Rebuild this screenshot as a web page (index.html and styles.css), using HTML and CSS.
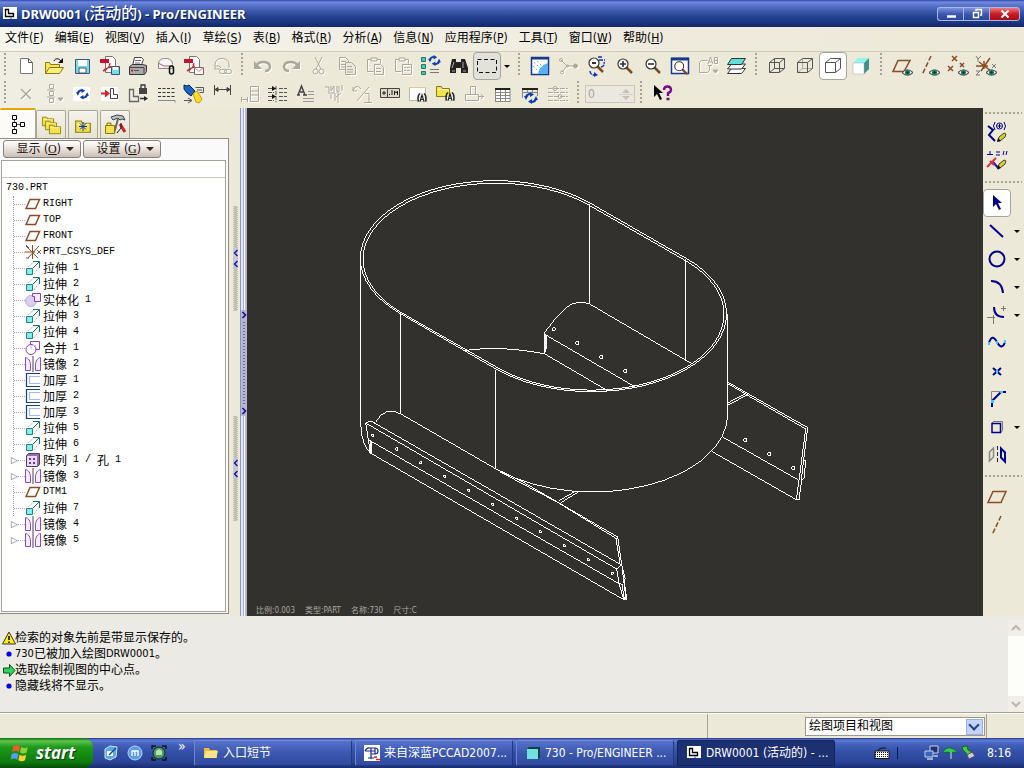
FILE: index.html
```html
<!DOCTYPE html>
<html lang="zh-CN">
<head>
<meta charset="utf-8">
<title>DRW0001 (活动的) - Pro/ENGINEER</title>
<link rel="stylesheet" href="styles.css">
</head>
<body>
<svg class="defs" aria-hidden="true">
  <defs>
    <symbol id="t-plane" viewBox="0 0 16 16"><path d="M5 3.500H14.500L10.500 12.500H1z" class="brown w15"/></symbol>
    <symbol id="t-csys" viewBox="0 0 16 16"><path d="M1 2l12 12M14 2L3 14M0 8h10M7.500 1v14" class="brown"/><path d="M1 1l3 3M1 14h3M12 6l4 4M16 6l-4 4" stroke="#666" fill="none"/></symbol>
    <symbol id="t-ext" viewBox="0 0 16 16"><path d="M1.500 8.500h6v6h-6z" fill="#7ff0ec" stroke="#2b7d7d"/><path d="M3 7l7-6M9 14l6-8" stroke="#8aa" stroke-dasharray="1 1"/><path d="M8 8l6-6M8 1.500h6.500V8" fill="none" stroke="#1d6a66"/></symbol>
    <symbol id="t-solid" viewBox="0 0 16 16"><circle cx="6" cy="9" r="5.500" fill="#d9cdf0" stroke="#c0aee0"/><path d="M7.500 1.500h8v8h-6v-5h-2z" fill="#f4eeff" stroke="#8a3fc0"/></symbol>
    <symbol id="t-merge" viewBox="0 0 16 16"><path d="M5.500 4.500v-3h9v8h-4" fill="none" stroke="#8a3fc0"/><circle cx="6" cy="9.500" r="5" fill="none" stroke="#8a3fc0"/><path d="M6 9.500V5.500h5" fill="none" stroke="#c9b7ee"/></symbol>
    <symbol id="t-mirror" viewBox="0 0 16 16"><path d="M.5 1.500v13h5V9c0-4-2-7-5-7.500M15.500 1.500v13h-5V9c0-4 2-7 5-7.500" fill="#f3ecff" stroke="#8c48c8"/><path d="M8 0v16" stroke="#444"/></symbol>
    <symbol id="t-thick" viewBox="0 0 16 16"><path d="M15 1.500H1.500v13H15" fill="none" stroke="#123c9a" stroke-width="1.200"/><path d="M15 4.500H4.500v7H15" fill="none" stroke="#a9b4ff" stroke-width="1.200"/></symbol>
    <symbol id="t-pattern" viewBox="0 0 16 16"><path d="M1.500 3.500l2-2h11v11l-2 2h-11z" fill="#8e6fa8" stroke="#553a70"/><path d="M2 4h10v10H2z" fill="#eadcf6"/><path d="M4 6h2v2H4zM8 6h2v2H8zM4 10h2v2H4zM8 10h2v2H8z" fill="#6b3b96"/></symbol>
    <symbol id="folder" viewBox="0 0 16 14"><path d="M1.500 12.500v-10h5l1 2h7v8z" fill="#f3e24c" stroke="#8a7a10"/><path d="M2.500 5.500h11" stroke="#fff8b0"/></symbol>
    <symbol id="eye" viewBox="0 0 10 6"><path d="M0 3q5-5 10 0q-5 5-10 0" fill="#fff" stroke="#555"/><circle cx="5" cy="3" r="2.300" fill="#167a5c"/><circle cx="5" cy="3" r="1" fill="#022"/></symbol>
    <symbol id="drw" viewBox="0 0 16 16"><path d="M1 1h14v12H1z" fill="#fff"/><path d="M3.500 3.500h3v4h5v3h-8z" fill="none" stroke="#000" stroke-width="1.300"/><path d="M7 13.500h8M9 11.500v3" stroke="#123a9c"/></symbol>
    <symbol id="swap" viewBox="0 0 14 12"><path d="M2 6c0-3 2-4 5-4M12 6c0 3-2 4-5 4" fill="none" stroke="#0b3fae" stroke-width="2"/><path d="M6 0l4 2.500L6 5zM8 7l-4 2.500L8 12z" fill="#0b3fae"/><path d="M0 4h4L2 8zM10 8h4l-2-4z" fill="#0b3fae"/></symbol>
    <symbol id="pdf" viewBox="0 0 16 18"><path d="M5.500.5h7l3 3v13h-10z" fill="#fff" stroke="#777"/><path d="M0 3h9v4H0z" fill="#c8102e"/><path d="M4 15c3-1 6-5 6-8M9 8c1 3 3 5 6 4M3 15q5-5 11-3" fill="none" stroke="#b9323c" stroke-width="1.200"/></symbol>
    <symbol id="pencil" viewBox="0 0 10 10"><path d="M1 9l1-4 5-4 2 1-1 3-5 4z" fill="#d8d02a" stroke="#443"/><path d="M0 10l1-4 3 3z" fill="#111"/></symbol>
    <symbol id="lens" viewBox="0 0 18 18"><path d="M10 10l6 6" stroke="#7a4a20" stroke-width="2.500"/><circle cx="7" cy="7" r="5" fill="#fffef4" stroke="#333" stroke-width="1.200"/></symbol>
    <symbol id="mark" viewBox="0 0 12 10"><path d="M1 9.500a5 5 0 1 1 10 0z" fill="#fff" stroke="#aaa" stroke-width=".6"/><path d="M2.500 9.500Q1 4 4 1.500M9.500 9.500Q11 4 8 1.500" fill="none" stroke="#222" stroke-width="1.500"/><path d="M4 9.500L6 3l2 6.500M5 7.500h2" fill="none" stroke="#222" stroke-width="1.200"/></symbol>
  </defs>
</svg>

<div class="app">
  <header class="titlebar">
    <svg class="i16"><use href="#drw"/></svg>
    <h1>DRW0001 (<span>活动的</span>) - Pro/ENGINEER</h1>
    <div class="winbtns">
      <button aria-label="最小化"><svg viewBox="0 0 24 12"><path d="M8 8.500h9" stroke="#fff" stroke-width="2.500"/></svg></button>
      <button aria-label="还原"><svg viewBox="0 0 24 12"><path d="M11 3V1.500h5.500V7H15M8.500 4.500h5v5h-5z" fill="none" stroke="#fff" stroke-width="1.400"/></svg></button>
      <button class="close" aria-label="关闭"><svg viewBox="0 0 24 12"><path d="M8.500 2.500l7 7M15.500 2.500l-7 7" stroke="#fff" stroke-width="2"/></svg></button>
    </div>
  </header>

  <nav class="menubar">
    <a href="#">文件(<u>F</u>)</a><a href="#">编辑(<u>E</u>)</a><a href="#">视图(<u>V</u>)</a><a href="#">插入(<u>I</u>)</a><a href="#">草绘(<u>S</u>)</a><a href="#">表(<u>B</u>)</a><a href="#">格式(<u>R</u>)</a><a href="#">分析(<u>A</u>)</a><a href="#">信息(<u>N</u>)</a><a href="#">应用程序(<u>P</u>)</a><a href="#">工具(<u>T</u>)</a><a href="#">窗口(<u>W</u>)</a><a href="#">帮助(<u>H</u>)</a>
  </nav>

  <div class="toolbars">
    <div class="toolbar">
      <i class="grip first"></i>
      <button class="tb" aria-label="新建"><svg viewBox="0 0 24 24"><path d="M6.500 4.500h8l4 4v11h-12z" fill="#fff" stroke="#777"/><path d="M14.500 4.500v4h4" fill="none" stroke="#555"/></svg></button>
      <button class="tb" aria-label="打开"><svg viewBox="0 0 24 24"><path d="M3.500 19.500v-11h4l1 2h9v3" fill="#f6e65a" stroke="#8a7a10"/><path d="M3.500 19.500l4-6h14l-4 6z" fill="#fbf07c" stroke="#8a7a10"/><path d="M12 7c1-3 5-3 7 0" fill="none" stroke="#111"/><path d="M21 4v5h-5z" fill="#111"/></svg></button>
      <button class="tb" aria-label="保存"><svg viewBox="0 0 24 24"><path d="M5.500 5.500h14v14h-14z" fill="#7adbe6" stroke="#457"/><path d="M8 6h9v6H8z" fill="#fff"/><path d="M9 14h7v5H9z" fill="#fff" stroke="#457"/></svg></button>
      <button class="tb" aria-label="保存PDF"><svg viewBox="0 0 24 24"><use href="#pdf" x="2" y="2" width="16" height="18"/><path d="M13.500 12.500h8v8h-8z" fill="#7adbe6" stroke="#357"/><path d="M15 13h5v3h-5z" fill="#fff"/></svg></button>
      <button class="tb" aria-label="打印"><svg viewBox="0 0 24 24"><path d="M6.500 12l2-8.500h7l2 2L15 12z" fill="#fff" stroke="#444"/><path d="M9 6.500h6M9 9h5" stroke="#666"/><path d="M3.500 12.500l3-2h10l4 1v6l-2 3h-15z" fill="#aaa" stroke="#333"/><path d="M3 13.500h15v6" fill="none" stroke="#444"/><path d="M5 16.500h2" stroke="#d22" stroke-width="2"/><path d="M8 16.500h5" stroke="#555"/></svg></button>
      <button class="tb" aria-label="邮件"><svg viewBox="0 0 24 24"><path d="M4.500 14.500v-5q1-5 6-5h3q5 1 5 6v4z" fill="#f5f5f5" stroke="#888"/><path d="M4 9l6 3h8" fill="none" stroke="#a66"/><path d="M15.500 18v-4q0-2 2-2t2 2v4q0 2-2 2t-2-2" fill="none" stroke="#111" stroke-width="1.500"/></svg></button>
      <button class="tb" aria-label="邮寄PDF"><svg viewBox="0 0 24 24"><use href="#pdf" x="2" y="2" width="16" height="18"/><path d="M12.500 13.500h9v7h-9z" fill="#fff" stroke="#866"/><path d="M12.500 13.500l4.500 4 4.500-4" fill="none" stroke="#c88"/></svg></button>
      <button class="tb off" aria-label="链接"><svg viewBox="0 0 24 24"><path d="M5 15.500V10q1-5.500 6-5.500h2q6 1 6 6v3M5 15h5M5 12h4l2 2"/><rect x="9.500" y="15.500" width="7" height="4" rx="2"/><rect x="14.500" y="15.500" width="7" height="4" rx="2"/></svg></button>
      <i class="grip"></i>
      <button class="tb off" aria-label="撤消"><svg viewBox="0 0 24 24"><path d="M5 12c3-6 14-5 14 1 0 3-3 4-5 4" stroke-width="2.500"/><path d="M3 7v8h8z" fill="#aca899" stroke="none"/></svg></button>
      <button class="tb off" aria-label="重做"><svg viewBox="0 0 24 24"><path d="M19 12C16 6 5 7 5 13c0 3 3 4 5 4" stroke-width="2.500"/><path d="M21 7v8h-8z" fill="#aca899" stroke="none"/></svg></button>
      <button class="tb off" aria-label="剪切"><svg viewBox="0 0 24 24"><path d="M8 3l6 12M15 3L9 15"/><circle cx="8.500" cy="17.500" r="2.500"/><circle cx="14.500" cy="17.500" r="2.500"/></svg></button>
      <button class="tb off" aria-label="复制"><svg viewBox="0 0 24 24"><path d="M4.500 3.500h6l3 3v9h-9zM6 7.500h5M6 10.500h5M6 13h4"/><path d="M10.500 8.500h6l4 4v8h-10z" fill="#ece9d8"/><path d="M12 12.500h5M12 15.500h6M12 18h6"/></svg></button>
      <button class="tb off" aria-label="粘贴"><svg viewBox="0 0 24 24"><path d="M8 5.500H4.500v12h6M14 5.500h3.500v4M8 4h6v3H8z"/><path d="M11.500 10.500h6l3 3v7h-9zM13 14.500h5M13 17.500h5"/></svg></button>
      <button class="tb off" aria-label="选择性粘贴"><svg viewBox="0 0 24 24"><path d="M8 5.500H4.500v12h6M14 5.500h3.500v4M8 4h6v3H8z"/><path d="M11.500 10.500h9v10h-9zM13 13.500h2M16 13.500h3M13 16.500h2M16 16.500h3"/></svg></button>
      <button class="tb" aria-label="再生"><svg viewBox="0 0 24 24"><path d="M2.500 3.500h4v4h-4zM2.500 10.500h4v4h-4zM2.500 17.500h4v3h-4z" fill="#48c8b4" stroke="#276"/><use href="#swap" x="9" y="1" width="13" height="11"/><path d="M11 15.500h9M11 18.500h9" stroke="#777"/></svg></button>
      <button class="tb" aria-label="查找"><svg viewBox="0 0 24 24"><path d="M5 5h4v3h5V5h4l3 9v5h-7v-5h-5v5H3v-5z" fill="#222"/><path d="M7 8l-2 6M16 8v6M5 17h3M16 17h3" stroke="#aaa"/></svg></button>
      <button class="tb on" aria-label="选取框"><svg viewBox="0 0 24 24"><path d="M2.500 5.500h19v13h-19z" fill="none" stroke="#111" stroke-dasharray="4 2.500"/></svg></button>
      <button class="dd" aria-label="更多选取"></button>
      <i class="grip"></i>
      <button class="tb" aria-label="重画"><svg viewBox="0 0 24 24"><path d="M3.500 3.500h17v17h-17z" fill="#fff" stroke="#15398c" stroke-width="1.500"/><path d="M3 4.500h18" stroke="#15398c" stroke-width="2"/><path d="M10 20q1-8 10-11v11z" fill="#58b0f0"/><path d="M6 8l9 9M9 7l6 6M5 12l6 6" stroke="#6bc" stroke-dasharray="2 2"/></svg></button>
      <button class="tb off" aria-label="旋转中心"><svg viewBox="0 0 24 24"><path d="M5 6l6 6h8M11 12l-5 6"/><circle cx="5" cy="6" r="1.500"/><circle cx="19.500" cy="12" r="2" fill="#aca899"/><circle cx="6" cy="18.500" r="1.500"/><circle cx="11.500" cy="12" r="1"/></svg></button>
      <button class="tb" aria-label="定向模式"><svg viewBox="0 0 24 24"><use href="#lens" x="3" y="2" width="18" height="18"/><path d="M8 9h4" stroke="#333" stroke-width="2"/><path d="M14 3h5M15 6h6M6 17q0 4 5 4M17 13q4-1 3-5" fill="none" stroke="#1236b0" stroke-width="1.500" stroke-dasharray="4 1"/><path d="M10 18l4 3-4 2z" fill="#1236b0"/></svg></button>
      <button class="tb" aria-label="放大"><svg viewBox="0 0 24 24"><use href="#lens" x="4" y="3" width="18" height="18"/><path d="M8 10h6M11 7v6" stroke="#234" stroke-width="1.600"/></svg></button>
      <button class="tb" aria-label="缩小"><svg viewBox="0 0 24 24"><use href="#lens" x="4" y="3" width="18" height="18"/><path d="M8 10h6" stroke="#234" stroke-width="1.600"/></svg></button>
      <button class="tb" aria-label="重新调整"><svg viewBox="0 0 24 24"><path d="M3.500 4.500h17v15h-17z" fill="#fff" stroke="#15398c" stroke-width="1.500"/><path d="M3 5h18" stroke="#15398c" stroke-width="3"/><use href="#lens" x="5" y="6" width="16" height="16"/></svg></button>
      <button class="tb off" aria-label="已命名视图"><svg viewBox="0 0 24 24"><path d="M3.500 8.500l2-2h6M3.500 8.500v10h8l2-2v-5M12 11.500h4"/><path d="M12 10l2.500-7 2.500 7M13 8h3M18.500 3.500h3v6h-3zM18.500 6.500h3"/><path d="M17 16h5l-2.500 3z" fill="#aca899"/></svg></button>
      <button class="tb" aria-label="层"><svg viewBox="0 0 24 24"><path d="M3.500 19.500l4-5h14l-4 5z" fill="#fff" stroke="#333"/><path d="M3.500 15l4-5h14l-4 5z" fill="#fff" stroke="#333"/><path d="M3.500 10.500l4-6h14l-4 6z" fill="#5fe0d8" stroke="#333"/></svg></button>
      <i class="grip"></i>
      <button class="tb" aria-label="线框"><svg viewBox="0 0 24 24" class="cube"><path d="M4.500 8.500h10v10h-10zM9.500 4.500h10v10h-10zM4.500 8.500l5-4M14.500 8.500l5-4M14.500 18.500l5-4M4.500 18.500l5-4"/></svg></button>
      <button class="tb" aria-label="隐藏线"><svg viewBox="0 0 24 24" class="cube"><path d="M9.500 4.500v10h10M4.500 18.500l5-4" stroke="#aaa"/><path d="M4.500 8.500h10v10h-10zM9.500 4.500h10v10M9.500 4.500l-5 4M14.500 8.500l5-4M14.500 18.500l5-4"/></svg></button>
      <button class="tb on white" aria-label="无隐藏线"><svg viewBox="0 0 24 24" class="cube"><path d="M4.500 8.500h10v10h-10zM9.500 4.500h10v10M9.500 4.500l-5 4M14.500 8.500l5-4M14.500 18.500l5-4"/></svg></button>
      <button class="tb" aria-label="着色"><svg viewBox="0 0 24 24"><path d="M4 9l5-5h11l-5 5z" fill="#8ff4f4"/><path d="M15 9l5-5v11l-5 5z" fill="#3f8f8a"/><path d="M4 9h11v11H4z" fill="#fff" stroke="#aaa" stroke-width=".5"/></svg></button>
      <i class="grip"></i>
      <button class="tb" aria-label="平面显示"><svg viewBox="0 0 24 24"><path d="M8 6.500h12L14 17.500H3z" class="brown w15"/><use href="#eye" x="12" y="15" width="11" height="7"/></svg></button>
      <button class="tb" aria-label="轴显示"><svg viewBox="0 0 24 24"><path d="M13 2L4 21" class="brown w15" stroke-dasharray="5 2"/><use href="#eye" x="11" y="15" width="11" height="7"/></svg></button>
      <button class="tb" aria-label="点显示"><svg viewBox="0 0 24 24"><path d="M6 2l5 5M11 2L6 7M2 12l5 5M7 12l-5 5M14 9l4 4M18 9l-4 4" class="brown w15"/><use href="#eye" x="12" y="15" width="11" height="7"/></svg></button>
      <button class="tb" aria-label="坐标系显示"><svg viewBox="0 0 24 24"><path d="M5 8l12 9M16 4L7 17M2 12h12M10 7v8" class="brown w15"/><path d="M2 2l2 3 3-3M4 5v3M18 10l4 4M22 10l-4 4M2 17h4l-4 4h4" fill="none" stroke="#777"/><use href="#eye" x="12" y="15" width="11" height="7"/></svg></button>
    </div>
    <div class="toolbar">
      <i class="grip first"></i>
      <button class="tb off" aria-label="删除"><svg viewBox="0 0 24 24"><path d="M7 7l10 10M17 7L7 17" stroke-width="1.500"/></svg></button>
      <button class="tb off" aria-label="块"><svg viewBox="0 0 24 24"><path d="M7.500 2.500h4v4h-4zM7.500 9.500h4v4h-4zM7.500 16.500h4v4h-4zM5 8h8M5 15h8"/><path d="M16 16h5l-2.500 3z" fill="#aca899"/></svg></button>
      <button class="tb" aria-label="更新"><svg viewBox="0 0 24 24"><path d="M3 5h17v14H3z" fill="#fff"/><use href="#swap" x="6" y="6" width="13" height="12"/></svg></button>
      <button class="tb" aria-label="移动"><svg viewBox="0 0 24 24"><path d="M3 5h17v14H3z" fill="#fff"/><path d="M3 11.500h6" stroke="#d3222a" stroke-width="2"/><path d="M7 7.500l5 4-5 4z" fill="#d3222a"/><path d="M12.500 6.500h3v6h4v4h-7z" fill="none" stroke="#444"/></svg></button>
      <button class="tb" aria-label="锁定"><svg viewBox="0 0 24 24"><path d="M3.500 7.500h4v7h5v5h-9z" fill="none" stroke="#666" stroke-width="1.300"/><path d="M13 6h8v6h-8z" fill="#444"/><path d="M15 6V3h4v3M14 16.500h5" fill="none" stroke="#333" stroke-width="1.300"/><path d="M18 14l4 2.500-4 2.500z" fill="#222"/></svg></button>
      <button class="tb" aria-label="线型"><svg viewBox="0 0 24 24"><path d="M4 6.500h17M4 10.500h17M4 14.500h17" stroke="#333" stroke-dasharray="3 1.500"/><path d="M4 18.500h17v2" fill="none" stroke="#888"/></svg></button>
      <button class="tb" aria-label="高亮"><svg viewBox="0 0 24 24"><path d="M2 3l3 1 2-1 6 6-4 5-4-3-3-4z" fill="#1466c8" stroke="#124"/><path d="M11 12l4-3 5 8-3 4-3-1z" fill="#ffdf2b" stroke="#c90"/><path d="M13.500 5.500h8v5h-4M15 8h5M2 18.500h7M6 16l4 2.500L6 21" fill="none" stroke="#555"/></svg></button>
      <button class="tb" aria-label="尺寸"><svg viewBox="0 0 24 24"><path d="M4.500 3v10M20.500 3v10M5 7.500h15M5 7.500l3-2v4zM20 7.500l-3-2v4z" fill="#333" stroke="#444"/></svg></button>
      <button class="tb off" aria-label="标准尺寸"><svg viewBox="0 0 24 24"><path d="M3.500 20v-5M3.500 17.500h6M9.500 20v-5M12.500 4.500h8v15M12.500 4.500v15h8M12.500 9h8M12.500 13h8"/></svg></button>
      <button class="tb" aria-label="清理尺寸"><svg viewBox="0 0 24 24"><path d="M2 6.500h8M2 14.500h8M10 4v16M13 6.500h8M13 10.500h8M13 14.500h8M13 18.500h8M2 10.500h6M2 18.500h6" stroke="#555" stroke-dasharray="4 1"/><path d="M6 4l4 2.500L6 9zM6 12l4 2.500L6 17z" fill="#111"/></svg></button>
      <button class="tb" aria-label="注释"><svg viewBox="0 0 24 24"><path d="M4 13L7.500 4l3.500 9M6 10h4M3 13h3M9 13h4" fill="none" stroke="#444" stroke-width="1.500"/><path d="M14 9.500h6M14 12.500h6M9 16.500h11M9 19.500h11" stroke="#999"/></svg></button>
      <button class="tb off" aria-label="对齐"><svg viewBox="0 0 24 24"><path d="M3 5h4v5M9 4v5l3-5v6M15 4v6h2V4M20 3v6M6 11h7v8M9 12v5M16 11v10M19 11l-5 4"/></svg></button>
      <button class="tb off" aria-label="断开"><svg viewBox="0 0 24 24"><path d="M3 9l2-4q4-2 6 2M3 5v4h4M7 19L19 5M15 11.500h4v9M14 20.500h8"/></svg></button>
      <button class="tb" aria-label="几何公差"><svg viewBox="0 0 24 24"><path d="M2.500 6.500h19v9h-19zM9.500 6.500v9" fill="#ddd8c4" stroke="#444"/><path d="M4 11h4M6 9v4M11.500 13v-1M14 8v5M16.500 13V9l1.500 2 1.500-2v4" fill="none" stroke="#222"/></svg></button>
      <button class="tb" aria-label="符号"><svg viewBox="0 0 24 24"><path d="M3.500 5.500h16v13h-16z" fill="#fff" stroke="#bba"/><path d="M3 5.500h17" stroke="#d8cc90"/><use href="#mark" x="10" y="10" width="12" height="10"/></svg></button>
      <button class="tb" aria-label="符号库"><svg viewBox="0 0 24 24"><use href="#folder" x="1" y="2" width="16" height="14"/><use href="#mark" x="10" y="9" width="12" height="10"/></svg></button>
      <button class="tb off" aria-label="球标"><svg viewBox="0 0 24 24"><path d="M8.500 4.500h5v8h-5zM3.500 12.500h13v6h-13zM17 14.500h5M19 12l2 2.500-2 2.500"/></svg></button>
      <button class="tb" aria-label="表格"><svg viewBox="0 0 24 24"><path d="M5 8h15v12H5z" fill="#fff"/><path d="M5.500 6v14M10.500 6v14M15.500 6v14M20 6v14M5 10.500h15M5 13.500h15M5 16.500h15M5 19.500h15" stroke="#888"/><path d="M5 7h15" stroke="#222" stroke-width="2"/></svg></button>
      <button class="tb" aria-label="更新表"><svg viewBox="0 0 24 24"><path d="M4.500 6v10M4 10.500h16M9.500 6v5M14.500 6v5M19.500 6v8" stroke="#888"/><path d="M4 7h16" stroke="#222" stroke-width="2"/><use href="#swap" x="6" y="10" width="14" height="12"/></svg></button>
      <button class="tb off" aria-label="参数"><svg viewBox="0 0 24 24"><path d="M2 6.500h20M2 10.500h20M2 14.500h20M2 18.500h20" stroke-dasharray="5 1"/><circle cx="9" cy="6.500" r="2"/><circle cx="14" cy="14.500" r="2"/></svg></button>
      <i class="grip"></i>
      <label class="spin"><input type="text" value="0" aria-label="数值" disabled><span class="updn"><svg viewBox="0 0 14 16"><path d="M3 7l4-4 4 4zM3 10l4 4 4-4z" fill="#c4c1b4"/><path d="M0 8.500h14" stroke="#d2cfc2"/></svg></span></label>
      <i class="grip"></i>
      <button class="tb" aria-label="上下文帮助"><svg viewBox="0 0 24 24"><path d="M4 3v12l3-3 3 6 2-1-3-6h4z" fill="#000"/><path d="M14 8q0-3.500 3.500-3.500T21 8q0 2-3 3v3M16.500 17h3" fill="none" stroke="#7a0a86" stroke-width="2.400"/></svg></button>
    </div>
  </div>

  <main class="work">
    <aside class="side">
      <div class="tabs">
        <button class="tab sel" aria-label="模型树"><svg viewBox="0 0 24 24"><path d="M6.500 3.500h4v4h-4zM6.500 10.500h4v4h-4zM6.500 17.500h4v4h-4zM14.500 10.500h4v4h-4z" fill="#fff" stroke="#000"/><path d="M8.500 8v2M8.500 15v2M11 12.500h3" stroke="#555"/></svg></button>
        <button class="tab" aria-label="文件夹浏览器"><svg viewBox="0 0 24 24"><use href="#folder" x="2" y="2" width="14" height="12"/><use href="#folder" x="5" y="6" width="14" height="12"/><use href="#folder" x="9" y="10" width="14" height="12"/></svg></button>
        <button class="tab" aria-label="收藏夹"><svg viewBox="0 0 24 24"><use href="#folder" x="3" y="5" width="18" height="16"/><path d="M12 9v9M8 13.500h8M9 10.500l6 6M15 10.500l-6 6" stroke="#1236b0"/></svg></button>
        <button class="tab" aria-label="连接"><svg viewBox="0 0 24 24"><path d="M8 4l6-2 6 1 2 4-3-1-2 1-2-2-5 2z" fill="#b8c4cc" stroke="#444"/><path d="M15 6L11 20" stroke="#666" stroke-width="2"/><path d="M17 11l5 8" stroke="#c22" stroke-width="3"/><path d="M18 10v5l-4 5" fill="none" stroke="#222"/><path d="M2.500 12.500h9v8h-9z" fill="#f3e24c" stroke="#8a7a10"/><path d="M4 12v-2h4v2" fill="#f3e24c" stroke="#8a7a10"/></svg></button>
      </div>
      <div class="panel">
        <div class="btnrow">
          <button class="pbtn"><span>显示 (<u>O</u>)</span><i class="tri"></i></button>
          <button class="pbtn"><span>设置 (<u>G</u>)</span><i class="tri"></i></button>
        </div>
        <div class="treebox">
          <div class="treehead"></div>
          <div class="root">730.PRT</div>
          <ul class="tree">
            <li><svg><use href="#t-plane"/></svg>RIGHT</li>
            <li><svg><use href="#t-plane"/></svg>TOP</li>
            <li><svg><use href="#t-plane"/></svg>FRONT</li>
            <li><svg><use href="#t-csys"/></svg>PRT_CSYS_DEF</li>
            <li><svg><use href="#t-ext"/></svg><b>拉伸</b> 1</li>
            <li><svg><use href="#t-ext"/></svg><b>拉伸</b> 2</li>
            <li><svg><use href="#t-solid"/></svg><b>实体化</b> 1</li>
            <li><svg><use href="#t-ext"/></svg><b>拉伸</b> 3</li>
            <li><svg><use href="#t-ext"/></svg><b>拉伸</b> 4</li>
            <li><svg><use href="#t-merge"/></svg><b>合并</b> 1</li>
            <li><svg><use href="#t-mirror"/></svg><b>镜像</b> 2</li>
            <li><svg><use href="#t-thick"/></svg><b>加厚</b> 1</li>
            <li><svg><use href="#t-thick"/></svg><b>加厚</b> 2</li>
            <li><svg><use href="#t-thick"/></svg><b>加厚</b> 3</li>
            <li><svg><use href="#t-ext"/></svg><b>拉伸</b> 5</li>
            <li><svg><use href="#t-ext"/></svg><b>拉伸</b> 6</li>
            <li class="exp"><svg><use href="#t-pattern"/></svg><b>阵列</b> 1 / <b>孔</b> 1</li>
            <li class="exp"><svg><use href="#t-mirror"/></svg><b>镜像</b> 3</li>
            <li><svg><use href="#t-plane"/></svg>DTM1</li>
            <li><svg><use href="#t-ext"/></svg><b>拉伸</b> 7</li>
            <li class="exp"><svg><use href="#t-mirror"/></svg><b>镜像</b> 4</li>
            <li class="exp"><svg><use href="#t-mirror"/></svg><b>镜像</b> 5</li>
          </ul>
        </div>
      </div>
    </aside>
    <div class="sashgrips">
      <svg viewBox="0 0 5 105"><path d="M1 0v105M3 0v105" stroke="#98968a" stroke-dasharray="1 1"/><path d="M2 1v104M4 1v104" stroke="#98968a" stroke-dasharray="1 1"/><path d="M0 42h5v20H0z" fill="#c4c6dc"/><path d="M4.500 44l-3 3 3 3M4.500 55l-3 3 3 3" fill="none" stroke="#0c0c90" stroke-width="1.300"/></svg>
      <svg viewBox="0 0 5 105"><path d="M1 0v105M3 0v105" stroke="#98968a" stroke-dasharray="1 1"/><path d="M2 1v104M4 1v104" stroke="#98968a" stroke-dasharray="1 1"/><path d="M0 42h5v20H0z" fill="#c4c6dc"/><path d="M4.500 44l-3 3 3 3M4.500 55l-3 3 3 3" fill="none" stroke="#0c0c90" stroke-width="1.300"/></svg>
    </div>
    <div class="sash">
      <svg viewBox="0 0 6 106"><path d="M0 0h6v106H0z" fill="#b4b6d2"/><path d="M3 12v82" stroke="#222250" stroke-dasharray="1 2"/><path d="M1.500 2l3 3-3 3M1.500 98l3 3-3 3" fill="none" stroke="#0c0c90" stroke-width="1.500"/></svg>
    </div>
    <section class="canvas">
      <svg viewBox="247 108 736 508" preserveAspectRatio="xMinYMin meet" class="model">
        <g transform="translate(340.330 160.330) scale(.33333)">
          <path d="M751 129A405 233 0 0 0 179 459L467 626A405 233 0 0 0 1039 295Z"/>
          <path d="M747 135A396 227 0 0 0 185 458L473 623A396 227 0 0 0 1034 300Z"/>
          <path d="M748 130V431M1037 296V598M182 461V760M467 628V926M62 300V800Q64 850 90 878M1162 461V762"/>
          <path d="M1162 762A405 233 0 0 1 480 932"/>
          <path d="M375 570Q480 555 612 580L800 690M612 580V518L625 501Q650 465 676 443Q712 415 748 431L1054 610"/>
          <path d="M612 518L620 526V560L612 580M616 524V572M620 526L885 680"/>
          <path d="M106 785Q135 735 182 761L467 926L548 965L832 1130L845 1218L857 1318H850L836 1268L829 1226L840 1216L827 1134L655 1028L480 935"/>
          <path d="M106 790L92 782L76 788L84 838L90 878L850 1318M76 788L829 1226M92 782L840 1212M84 838L836 1270M90 840V878M95 842V882M836 1268L845 1272L852 1316M845 1218L855 1256L851 1262L860 1318"/>
          <path d="M655 1022L703 994M662 1027L712 996"/>
          <path d="M1162 665L1402 802L1390 898L1396 902L1391 954L1384 960L1376 1018H1368L1116 874M1145 829L1376 960L1396 806L1220 704L1162 735M1162 728L1214 701M1162 670L1222 704M1376 960L1368 1018M1383 958L1390 898"/>
          <g>
            <circle cx="640" cy="507" r="5"/><circle cx="711" cy="548" r="5"/><circle cx="783" cy="590" r="5"/><circle cx="855" cy="632" r="5"/>
            <circle cx="1215" cy="839" r="5"/><circle cx="1287" cy="881" r="5"/><circle cx="1359" cy="923" r="5"/>
            <circle cx="97" cy="825" r="4"/><circle cx="169" cy="866" r="4"/><circle cx="241" cy="907" r="4"/><circle cx="313" cy="948" r="4"/><circle cx="385" cy="990" r="4"/><circle cx="457" cy="1032" r="4"/><circle cx="529" cy="1074" r="4"/><circle cx="600" cy="1114" r="4"/><circle cx="672" cy="1156" r="4"/><circle cx="744" cy="1198" r="4"/><circle cx="816" cy="1239" r="4"/>
          </g>
        </g>
      </svg>
      <p class="note"><span>比例:0.003</span><span>类型:PART</span><span>名称:730</span><span>尺寸:C</span></p>
    </section>
    <div class="rbar">
      <i class="hgrip"></i>
      <button class="tb" aria-label="草绘参照"><svg viewBox="0 0 24 24"><path d="M3 5l5 4-4 5 6 6" class="navy"/><circle cx="14.500" cy="5" r="3" class="navy1"/><path d="M10 1q-3 4 0 8M19 1q3 4 0 8M14.500 3v4M12.500 5h4" class="navy1"/><use href="#pencil" x="12" y="11" width="10" height="10"/></svg></button>
      <button class="tb" aria-label="草绘约束"><svg viewBox="0 0 24 24"><path d="M2 5.500h6M5 2v4M11 3h4M11 6h4M18 6l1-4M21 6l1-4" class="navy1"/><path d="M8 13l6 7" stroke="#1a1ab0" stroke-width="2" fill="none"/><path d="M2 18l9-9M5 12l4 4" stroke="#d33" stroke-width="2"/><use href="#pencil" x="12" y="10" width="10" height="10"/></svg></button>
      <i class="hgrip"></i>
      <button class="tb on white" aria-label="选取"><svg viewBox="0 0 24 24"><path d="M8 4v12l3-3 3 6 2-1-3-6h4z" fill="#00008b"/></svg></button>
      <div class="rrow"><button class="tb" aria-label="直线"><svg viewBox="0 0 24 24"><path d="M5 6l13 12" class="navy"/></svg></button><button class="dd" aria-label="直线选项"></button></div>
      <div class="rrow"><button class="tb" aria-label="圆"><svg viewBox="0 0 24 24"><circle cx="12" cy="12" r="7.500" class="navy"/></svg></button><button class="dd" aria-label="圆选项"></button></div>
      <div class="rrow"><button class="tb" aria-label="弧"><svg viewBox="0 0 24 24"><path d="M6 6q11 0 12 12" class="navy"/></svg></button><button class="dd" aria-label="弧选项"></button></div>
      <div class="rrow"><button class="tb" aria-label="圆角"><svg viewBox="0 0 24 24"><path d="M9 4q0 10 10 10" class="navy"/><path d="M2 14.500h8M8.500 12v9M16 5.500h5M18.500 3v5" stroke="#777"/></svg></button><button class="dd" aria-label="圆角选项"></button></div>
      <button class="tb" aria-label="样条"><svg viewBox="0 0 24 24"><path d="M4 12q3-10 8-1t8 0" class="navy"/><path d="M3 11h2v3H3zM11 10h2v3h-2zM19 9h2v3h-2z" fill="#3cc8ff"/></svg></button>
      <button class="tb" aria-label="点"><svg viewBox="0 0 24 24"><path d="M8 9l8 7M16 9l-8 7" class="navy"/><path d="M11 11h2v3h-2z" fill="#3cc8ff"/></svg></button>
      <button class="tb" aria-label="倒角"><svg viewBox="0 0 24 24"><path d="M6.500 14V4.500H17" fill="none" stroke="#888"/><path d="M7 20v-6l9-9h5" class="navy"/><path d="M6 13h3v3H6zM15 4h3v2h-3z" fill="#3cc8ff"/></svg></button>
      <div class="rrow"><button class="tb" aria-label="使用边"><svg viewBox="0 0 24 24"><path d="M8 6.500h9.500v9M7 8l2-1.500M17.500 15.500l-1.500 2" fill="none" stroke="#777"/><path d="M7 8.500h8.500v9H7z" class="navy w15"/></svg></button><button class="dd" aria-label="使用边选项"></button></div>
      <button class="tb" aria-label="镜像"><svg viewBox="0 0 24 24"><path d="M4.500 9l4-4v9l-4 4z" fill="none" stroke="#888" stroke-width="1.500"/><path d="M12.500 3v18" stroke="#222" stroke-dasharray="4 2"/><path d="M16 5.500l4 4v9l-4-4z" class="navy"/></svg></button>
      <i class="hgrip"></i>
      <button class="tb" aria-label="基准平面"><svg viewBox="0 0 24 24"><path d="M8 6.500h13L16 17.500H3z" class="brown w15"/></svg></button>
      <button class="tb" aria-label="基准轴"><svg viewBox="0 0 24 24"><path d="M16 3L7 22" class="brown w15" stroke-dasharray="5 2"/></svg></button>
    </div>
  </main>

  <section class="messages">
    <ul>
      <li><svg viewBox="0 0 14 14"><path d="M7 1l6.500 12H.5z" fill="#ffee1a" stroke="#333"/><path d="M7 5v4M7 10.500v1.500" stroke="#000" stroke-width="1.500"/></svg>检索的对象先前是带显示保存的。</li>
      <li><svg viewBox="0 0 14 14"><circle cx="7" cy="7" r="2.600" fill="#0000e0"/></svg><small>730</small>已被加入绘图<small>DRW0001</small>。</li>
      <li><svg viewBox="0 0 14 14"><path d="M1.500 5h6V1.500l5.500 6-5.500 6V10h-6z" fill="#2fd65f" stroke="#0a4a1e"/></svg>选取绘制视图的中心点。</li>
      <li><svg viewBox="0 0 14 14"><circle cx="7" cy="7" r="2.600" fill="#0000e0"/></svg>隐藏线将不显示。</li>
    </ul>
    <div class="scroll">
      <button aria-label="向上滚动"><svg viewBox="0 0 16 16"><path d="M4 10l4-4 4 4" fill="none" stroke="#bbb9ae" stroke-width="2"/></svg></button>
      <button aria-label="向下滚动"><svg viewBox="0 0 16 16"><path d="M4 6l4 4 4-4" fill="none" stroke="#bbb9ae" stroke-width="2"/></svg></button>
    </div>
  </section>

  <footer class="status">
    <div class="cell grow"></div>
    <div class="cell filter"><select aria-label="选取过滤器"><option>绘图项目和视图</option></select></div>
    <div class="cell last"></div>
  </footer>

  <div class="taskbar">
    <button class="start"><svg viewBox="0 0 18 18"><path d="M3 3q3-2 6 0L8 8q-3-2-6 0z" fill="#f1592a"/><path d="M10 3.500q3 2 6 0L15 8.500q-3 2-6 0z" fill="#8bd03c"/><path d="M1.500 10q3-2 6 0l-1 5q-3-2-6 0z" fill="#5c9cf5"/><path d="M8.500 10.500q3 2 6 0l-1 5q-3 2-6 0z" fill="#fccf2d"/></svg>start</button>
    <div class="quick">
      <a href="#" aria-label="显示桌面"><svg viewBox="0 0 16 16"><path d="M2 4l5-3 7 1-1 10-6 3-5-2z" fill="#58a6e8" stroke="#cfe6ff"/><path d="M4 6h6v5H4z" fill="#fff"/><path d="M6 10l7-7" stroke="#124a98" stroke-width="1.500"/></svg></a>
      <a href="#" aria-label="浏览器"><svg viewBox="0 0 16 16"><circle cx="8" cy="8" r="7" fill="#5c9cec" stroke="#b4d4fa"/><path d="M5 11V6h6v5M8 6v5" fill="none" stroke="#fff" stroke-width="1.300"/></svg></a>
      <a href="#" aria-label="工具"><svg viewBox="0 0 16 16"><path d="M1 4V1h4M11 1h4v3M15 12v3h-4M5 15H1v-3" fill="none" stroke="#111" stroke-width="1.500"/><circle cx="8" cy="8" r="6" fill="#4e9a58" stroke="#123"/><path d="M5 6l3-2 3 2v4H5z" fill="#b8e0b0"/></svg></a>
      <span>»</span>
    </div>
    <div class="tasks">
      <button class="task"><svg viewBox="0 0 16 16"><path d="M1 13V3h5l1 2h7v8z" fill="#f5b83d"/><path d="M1 13l2-7h12l-2 7z" fill="#ffe48a"/></svg><span>入口短节</span></button>
      <button class="task"><svg viewBox="0 0 16 16"><path d="M0 0h16v16H0z" fill="#fff"/><path d="M1 6q2-4 5-3h5q3 0 3 3t-3 3H7M1 6h10M7 3v11M11 3v6M4 13h6" fill="none" stroke="#1a2a90" stroke-width="1.200"/><path d="M10 12h3M12 14.500h4" stroke="#d22" stroke-width="1.500"/></svg><span>来自深蓝PCCAD2007...</span></button>
      <button class="task"><svg viewBox="0 0 16 16"><path d="M2 4l2-2h11v10l-2 2H2z" fill="#123e46"/><path d="M2 4h11v10H2z" fill="#6fe0da"/></svg><span>730 - Pro/ENGINEER ...</span></button>
      <button class="task active"><svg viewBox="0 0 16 16"><use href="#drw"/></svg><span>DRW0001 (活动的) - ...</span></button>
    </div>
    <div class="tray">
      <svg viewBox="0 0 16 16"><path d="M1 6h14v8H1z" fill="#fff"/><path d="M1 7.500h14M1 9.500h14M1 11.500h14" stroke="#111" stroke-dasharray="1 1"/><path d="M1 13.500h14M1 6v8M15 6v8M1 6h14M4 6q0-2 4-3h4" fill="none" stroke="#111"/></svg>
      <i class="bar"></i>
      <svg viewBox="0 0 16 16"><path d="M6 1h8v7H6z" fill="#20346e" stroke="#c4d0f0"/><path d="M1 6h8v6H1z" fill="#3a62b8" stroke="#c4d0f0"/><path d="M3 14h6M10 11h4" stroke="#c4d0f0" stroke-width="1.500"/></svg>
      <svg viewBox="0 0 16 16"><path d="M1 8q2-6 8-5 5 1 6 5-4-2-6 0-4-2-8 0" fill="#3cc85a" stroke="#0c6e2a"/><path d="M9 7v7" stroke="#ddd"/></svg>
      <svg viewBox="0 0 16 16"><path d="M2 2l5-1 1 4 4 2-4 3-5-5z" fill="#46d040" stroke="#14691c"/><path d="M7 10l5-3 3 4-6 3z" fill="#ccd" stroke="#556"/></svg>
      <time>8:16</time>
    </div>
  </div>
</div>
</body>
</html>
```
FILE: styles.css
```css
* { box-sizing: border-box; }
html, body { height: 100%; margin: 0; }
body {
  font-family: "DejaVu Sans Condensed", "Noto Sans CJK SC", sans-serif;
  font-size: 12px;
  line-height: 16px;
  color: #000;
  background: #ece9d8;
}
button { font: inherit; color: inherit; padding: 0; margin: 0; border: 0; background: none; }
a { color: inherit; text-decoration: none; }
svg { display: block; }
ul { list-style: none; margin: 0; padding: 0; }
.defs { position: absolute; width: 0; height: 0; }
.app { min-height: 100vh; display: flex; flex-direction: column; overflow: hidden; }

.brown { fill: none; stroke: #8a4b28; }
.navy { fill: none; stroke: #00008b; stroke-width: 2; }
.navy1 { fill: none; stroke: #00008b; stroke-width: 1; }
.w15 { stroke-width: 1.5; }
.i16 { width: 16px; height: 16px; }

.titlebar {
  height: 27px;
  display: flex;
  align-items: center;
  gap: 3px;
  padding: 0 4px 0 2px;
  color: #fff;
  background: linear-gradient(#2b46ae 0, #7389dc 2px, #5c76cc 5px, #3d59ae 11px, #25428f 17px, #1c3682 22px, #122768 27px);
}
.titlebar h1 { flex: 1; margin: 0; font: bold 13px/20px "Noto Sans", "Noto Sans CJK SC", sans-serif; text-shadow: 1px 1px #0c1f5c; }
.titlebar h1 span { font-size: 16px; font-weight: 500; }
.winbtns { display: flex; }
.winbtns button {
  width: 26px;
  height: 14px;
  border: 1px solid #a8b6ea;
  border-right-width: 0;
  background: linear-gradient(#7d92dd, #3c58b0 50%, #2b4699);
}
.winbtns button:first-child { border-radius: 3px 0 0 3px; }
.winbtns .close { width: 31px; border-right-width: 1px; border-radius: 0 3px 3px 0; background: linear-gradient(#f07a7a, #c81c24 50%, #a80c14); }
.winbtns svg { width: 24px; height: 12px; margin: 0 auto; }

.menubar {
  height: 25px;
  display: flex;
  align-items: center;
  gap: 11px;
  padding: 0 5px 2px;
  white-space: nowrap;
  background: linear-gradient(90deg, #f6f5ee, #efecdf 60%, #ece9d8);
  border-bottom: 1px solid #cfccbb;
}

.toolbars { height: 56px; background: linear-gradient(90deg, #f0eee2, #ece9d8 30%); }
.toolbar { display: flex; height: 28px; }
.tb { width: 28px; height: 28px; flex: none; display: flex; align-items: center; justify-content: center; border: 1px solid transparent; }
.tb svg { width: 24px; height: 24px; flex: none; }
.tb.on { border-color: #a5a49c; border-radius: 4px; background: #e2e1da; }
.tb.on.white { background: #fff; }
.tb.off svg { fill: none; stroke: #aca899; filter: drop-shadow(1px 1px 0 #fff); }
.cube { fill: none; stroke: #555; }
.dd { width: 12px; height: 28px; flex: none; display: flex; align-items: center; justify-content: center; }
.dd::before { content: ""; border: 3px solid transparent; border-top-color: #000; border-bottom-width: 0; }
.grip { width: 13px; height: 26px; flex: none; background: repeating-linear-gradient(#a6a497 0 2px, transparent 2px 4px) 5px 1px / 2px 24px no-repeat; }
.grip.first { width: 12px; background-position: 4px 1px; }
.spin { width: 50px; height: 18px; margin-top: 5px; flex: none; display: flex; border: 1px solid #c9c7ba; background: #ebe9df; }
.spin input { width: 32px; min-width: 0; border: 0; padding: 0 2px; font: inherit; color: #a7a598; background: none; }
.updn { width: 16px; padding: 0 1px; }
.updn svg { width: 14px; height: 16px; }

.work { flex: 1; display: flex; min-height: 508px; }
.side { width: 229px; flex: none; display: flex; flex-direction: column; }
.tabs { display: flex; height: 30px; align-items: flex-end; gap: 2px; }
.tab { width: 30px; height: 28px; border: 1px solid #a9a799; border-bottom: 0; border-radius: 2px 2px 0 0; background: linear-gradient(#f4f3ec, #e6e3d2); display: flex; justify-content: center; align-items: center; }
.tab.sel { width: 36px; height: 30px; margin-right: -2px; background: #fcfbf8; border-top: 2px solid #e8a400; border-left: 0; }
.tab svg { width: 24px; height: 24px; }
.panel { flex: 1; display: flex; flex-direction: column; margin-bottom: 2px; border: 1px solid #8f8d83; border-left: 0; background: #fbfafa; }
.btnrow { display: flex; gap: 2px; padding: 1px 3px 2px; }
.pbtn {
  width: 78px;
  height: 18px;
  display: flex;
  align-items: center;
  justify-content: flex-end;
  gap: 5px;
  padding-right: 6px;
  white-space: nowrap;
  border: 1px solid #8b817a;
  border-radius: 3px;
  color: #201010;
  background: linear-gradient(#fff, #e9e2dc 50%, #c9beb6);
}
.pbtn u { font-family: "Liberation Serif", serif; }
.tri { border: 4px solid transparent; border-top-color: #3a2020; border-bottom-width: 0; }
.treebox { flex: 1; margin: 0 2px 1px 1px; border: 1px solid #a3a199; background: #fff; font: 10px/16px "Liberation Mono", "Noto Sans CJK SC", monospace; }
.treehead { height: 17px; border-bottom: 1px solid #c6c4bc; }
.root { padding: 2px 0 0 4px; }
.tree { margin-left: 11px; border-left: 1px dotted #999; }
.tree li { height: 16px; display: flex; align-items: center; white-space: pre; position: relative; }
.tree li::before { content: ""; width: 11px; border-top: 1px dotted #aaa; }
.tree li svg { width: 16px; height: 16px; margin-right: 2px; }
.tree b { font: 12px/16px "Noto Sans CJK SC", sans-serif; }
.tree .exp::after { content: "▷"; position: absolute; left: -3px; top: 0; width: 7px; font: 9px/16px "DejaVu Sans", sans-serif; color: #666; background: #fff; }
.sashgrips { width: 11px; flex: none; display: flex; flex-direction: column; align-items: center; padding: 98px 0 0 2px; gap: 105px; background: #ece9d8; }
.sashgrips svg { width: 5px; height: 105px; }
.sash { width: 7px; flex: none; background: linear-gradient(90deg, #8f94c8 0 1px, #e4e8fa 1px 3px, #a6aad8 3px 4px, #fff 4px 5px, #b5b7d8 5px 7px); padding: 202px 0 0 1px; }
.sash svg { width: 6px; height: 106px; }
.canvas { flex: 1; min-width: 0; position: relative; background: #33312d; overflow: hidden; }
.model { width: 100%; height: 100%; fill: none; stroke: #fff; stroke-width: 3px; shape-rendering: crispEdges; }
.note { position: absolute; left: 9px; bottom: 1px; margin: 0; display: flex; gap: 10px; font: 8px/8px "DejaVu Sans Condensed", "Noto Sans CJK SC", sans-serif; color: #aaa8a0; }

.rbar { width: 41px; flex: none; display: flex; flex-direction: column; background: #ece9d8; }
.hgrip { height: 14px; flex: none; background: repeating-linear-gradient(90deg, #a6a497 0 2px, transparent 2px 4px) 2px 6px / 37px 2px no-repeat; }
.hgrip:first-child { height: 11px; background-position: 2px 4px; }
.rrow { display: flex; }

.messages { height: 97px; display: flex; justify-content: space-between; padding-top: 4px; background: #ebeae4; border-bottom: 1px solid #a7a092; }
.messages ul { padding: 10px 0 0 2px; }
.messages li { display: flex; align-items: center; height: 16px; }
.messages li svg { width: 14px; height: 14px; margin-right: -1px; }
.messages small { font-size: 11px; }
.scroll { width: 16px; display: flex; flex-direction: column; justify-content: space-between; background: #fdfdfa; }
.scroll button { width: 16px; height: 16px; background: #f0eee6; }
.scroll svg { width: 16px; height: 16px; }

.status { height: 25px; display: flex; background: #ece9d8; border-top: 1px solid #fff; }
.cell { border-right: 1px solid #a7a092; }
.grow { flex: 1; }
.filter { position: relative; width: 279px; display: flex; justify-content: flex-end; align-items: center; padding-right: 1px; }
.last { width: 37px; border-right: 0; }
.status select {
  width: 180px;
  height: 19px;
  appearance: none;
  padding: 0 3px;
  font: inherit;
  color: #000;
  border: 1px solid #9a988c;
  border-radius: 0;
  background: #fff;
}
.filter::after { content: ""; position: absolute; right: 3px; top: 5px; width: 15px; height: 14px; background: #c3d3fb; border: 1px solid #9ab0e4; pointer-events: none; }
.filter::before { content: ""; position: absolute; z-index: 1; right: 8px; top: 7px; width: 6px; height: 6px; border: solid #26427c; border-width: 0 2px 2px 0; transform: rotate(45deg); pointer-events: none; }

.taskbar {
  height: 30px;
  display: flex;
  align-items: stretch;
  color: #fff;
  background: linear-gradient(#20357c 0, #5f7cd8 2px, #4562bd 6px, #334fa6 14px, #2a4597 24px, #182c70 30px);
}
.start {
  width: 93px;
  display: flex;
  align-items: center;
  gap: 6px;
  padding: 0 0 1px 10px;
  border-radius: 0 9px 9px 0;
  font: italic bold 17px/24px "Open Sans", "Noto Sans", sans-serif;
  text-shadow: 1px 1px 1px #063806;
  background: linear-gradient(#0b6a10 0, #5cc44c 3px, #1f9a1c 9px, #12870f 18px, #0f7a0e 24px, #064c08 30px);
}
.start svg { width: 20px; height: 20px; }
.quick { width: 101px; display: flex; align-items: center; gap: 8px; padding-left: 10px; }
.quick a svg { width: 16px; height: 16px; }
.quick span { align-self: flex-start; padding-left: 3px; font-size: 14px; }
.tasks { flex: 1; display: flex; align-items: center; gap: 3px; }
.task {
  width: 158px;
  height: 26px;
  display: flex;
  align-items: center;
  gap: 4px;
  padding: 0 8px;
  white-space: nowrap;
  border-radius: 2px;
  border: 1px solid #6d86d6;
  border-color: #6d86d6 #22397f #22397f #6d86d6;
  background: linear-gradient(#5672cc, #3b57ae 50%, #304b9f);
}
.task.active { background: #1c3072; border-color: #14245a; }
.task svg { width: 16px; height: 16px; flex: none; }
.tray { width: 150px; display: flex; align-items: center; gap: 2px; }
.tray svg { width: 16px; height: 16px; }
.bar { width: 1px; height: 12px; margin: 0 24px 0 5px; background: #0b1a4c; }
.tray time { margin-left: 9px; }
```
